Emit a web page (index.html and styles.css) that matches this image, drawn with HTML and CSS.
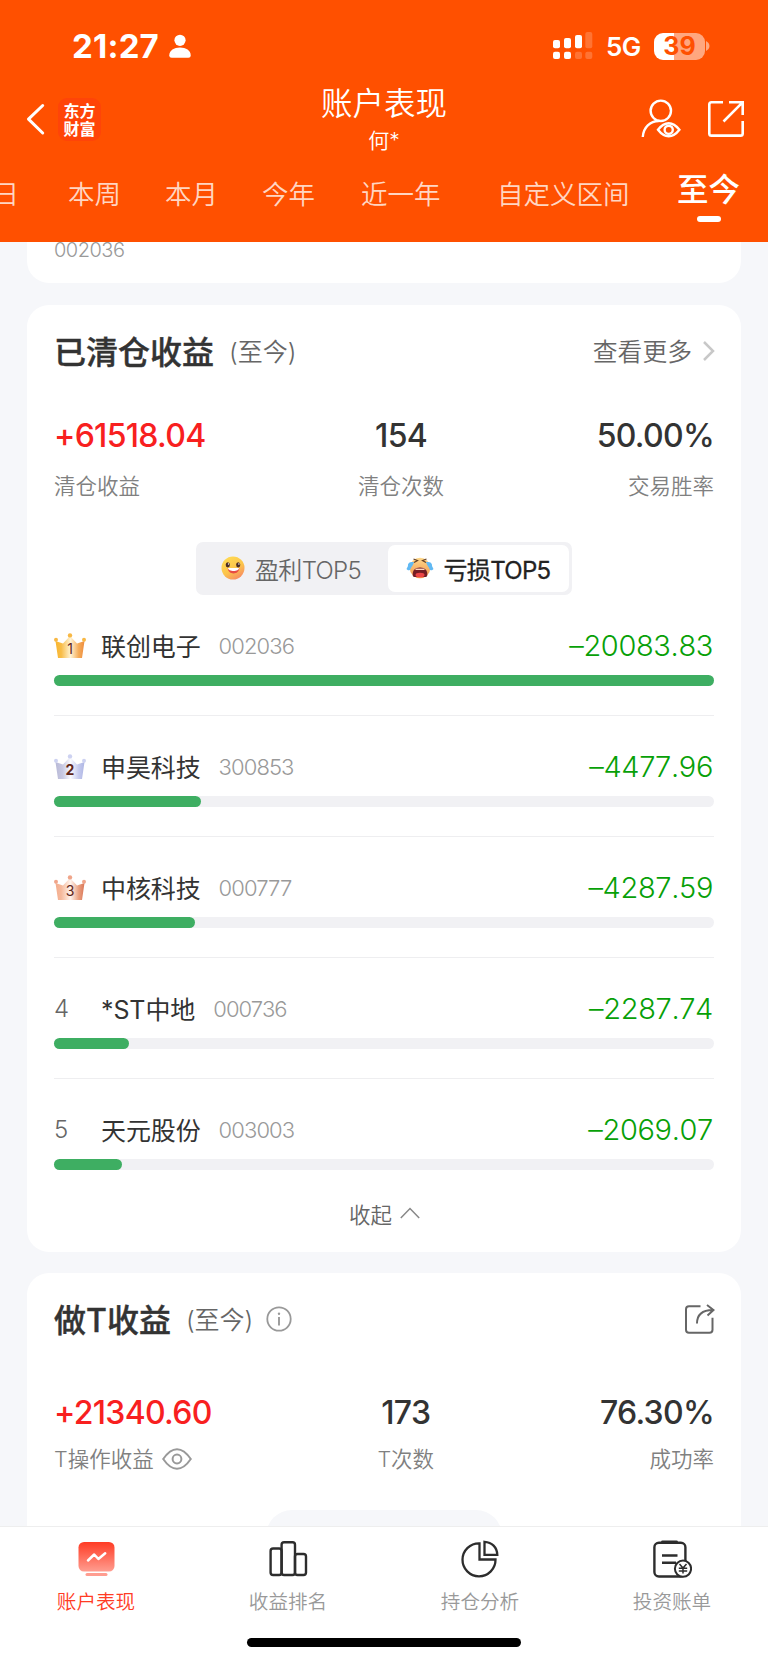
FILE: index.html
```html
<!DOCTYPE html>
<html lang="zh-CN">
<head>
<meta charset="utf-8">
<title>账户表现</title>
<link rel="stylesheet" href="styles.css">
</head>
<body>
<div class="app">
  <header class="header">
    <div class="status">
      <span class="time">21:27</span>
      <svg class="person" width="22" height="24" viewBox="169 34 22 24" fill="#fff"><circle cx="180" cy="40.3" r="5.6"/><path d="M169.3 55.2c0-4.6 4.8-7.6 10.7-7.6s10.7 3 10.7 7.6c0 1.7-.9 2.5-2.4 2.5h-16.6c-1.5 0-2.4-.8-2.4-2.5z"/></svg>
      <svg class="signal" width="40" height="28" viewBox="553 32 40 28" fill="#fff"><rect x="553" y="40" width="7" height="8.3" rx="2"/><rect x="564" y="38" width="7" height="10.3" rx="2"/><rect x="575" y="35" width="7" height="13.3" rx="2"/><rect x="585.3" y="32" width="7" height="16.3" rx="2" opacity=".2"/><rect x="553" y="51.8" width="7" height="7.2" rx="2"/><rect x="564" y="51.8" width="7" height="7.2" rx="2"/><rect x="575" y="51.8" width="7" height="7.2" rx="2" opacity=".2"/><rect x="585.3" y="51.8" width="7" height="7.2" rx="2" opacity=".2"/></svg>
      <span class="network">5G</span>
      <span class="battery">39</span>
      <svg class="battery-tip" width="4" height="10" viewBox="0 0 4 10"><path d="M0 0c2 1 3.5 2.800 3.500 5s-1.500 4-3.500 5z" fill="#fff" opacity=".5"/></svg>
    </div>
    <div class="titlebar">
      <div class="left">
        <svg width="20" height="34" viewBox="25 102 20 34" fill="none" stroke="#fff" stroke-width="3" stroke-linecap="round" stroke-linejoin="round"><path d="M42.700 105.500 28.500 119.200 42.700 133"/></svg>
        <div class="logo">东方<br>财富</div>
      </div>
      <div class="center"><h1>账户表现</h1><div class="user">何*</div></div>
      <div class="right">
        <svg width="40" height="40" viewBox="641 99 40 40" fill="none" stroke="#fff" stroke-width="2.400"><circle cx="660.800" cy="110.800" r="10.200"/><path d="M642.800 137c.5-9.500 7.500-16 16-16"/><path d="M658 129.800q5-6.500 10.700-6.500t10.700 6.500q-5 6.500-10.700 6.500T658 129.800z"/><circle cx="668.700" cy="129.800" r="4.100"/></svg>
        <svg width="37" height="38" viewBox="708 100 37 38" fill="none" stroke="#fff" stroke-width="2.600"><path d="M723 102.200h-11.500q-2.200 0-2.200 2.200v29q0 2.200 2.200 2.200h29q2.200 0 2.200-2.200V121M729 102.200h13.700V115M742.300 102.600 723.500 121.500"/></svg>
      </div>
    </div>
    <nav class="ranges"><span class="first">昨日</span><span>本周</span><span>本月</span><span>今年</span><span>近一年</span><span>自定义区间</span><span class="on">至今</span></nav>
  </header>

  <main class="content">
    <section class="card previous"><span>002036</span></section>

    <section class="card cleared">
      <div class="card-head">
        <h2>已清仓收益</h2><span class="period">(至今)</span>
        <span class="more">查看更多<svg width="12" height="20" viewBox="0 0 12 20" fill="none" stroke="#c8c8c8" stroke-width="2.500"><path d="M1 1l9 9-9 9"/></svg></span>
      </div>
      <div class="stats">
        <div class="stat"><b class="up">+61518.04</b><span>清仓收益</span></div>
        <div class="stat mid"><b>154</b><span>清仓次数</span></div>
        <div class="stat end"><b>50.00%</b><span>交易胜率</span></div>
      </div>
      <div class="switch">
        <div class="option">
          <svg width="24" height="24" viewBox="0 0 24 24"><defs><linearGradient id="smile" x1=".2" y1="0" x2=".8" y2="1"><stop offset="0" stop-color="#ffdb52"/><stop offset=".55" stop-color="#fcc44b"/><stop offset="1" stop-color="#f78565"/></linearGradient></defs><circle cx="12" cy="12" r="11.500" fill="url(#smile)"/><ellipse cx="6.800" cy="8.800" rx="2.100" ry="2.600" fill="#4b2c23"/><ellipse cx="17.200" cy="8.800" rx="2.100" ry="2.600" fill="#4b2c23"/><circle cx="7.500" cy="8" r=".7" fill="#fff"/><circle cx="17.900" cy="8" r=".7" fill="#fff"/><path d="M6.800 12h11.400c.4 7-11.400 7.500-11.400 0z" fill="#e84b43"/><path d="M7 12h11c0 4-10.800 4-11 0z" fill="#fff"/></svg>
          <span>盈利TOP5</span>
        </div>
        <div class="option on">
          <svg width="28" height="24" viewBox="0 0 28 24"><defs><linearGradient id="cry" x1="0" y1="0" x2="0" y2="1"><stop offset="0" stop-color="#ffd98a"/><stop offset="1" stop-color="#f2934b"/></linearGradient></defs><circle cx="14" cy="12" r="10.300" fill="url(#cry)"/><path d="M7.500 3l4 1.500-3.500 2M20.500 3l-4 1.500 3.500 2" fill="none" stroke="#654127" stroke-width="1.200"/><path d="M8 6C4 5.500 1.500 7 2 10l-1.500 3c1.500 2 3.500 1.500 4 0 .5-2 3-4 3.500-7zM20 6c4-.5 6.500 1 6 4l1.500 3c-1.500 2-3.500 1.500-4 0-.5-2-3-4-3.500-7z" fill="#61b9f3"/><path d="M6.800 19.500c-.6-5 2-8 7.200-8s7.800 3 7.200 8c-.2 1.200-1 1.500-2.200 1.500H9c-1.200 0-2-.3-2.200-1.500z" fill="#741d24"/><path d="M9.500 12.600h9v1.400h-9z" fill="#ffd8bd"/><ellipse cx="14" cy="19" rx="4.500" ry="2.300" fill="#ed4546"/></svg>
          <span>亏损TOP5</span>
        </div>
      </div>
      <div class="list">
        <div class="row"><div class="line"><span class="rank">
          <svg width="32" height="26" viewBox="0 0 32 26"><defs><linearGradient id="gold"><stop offset="0" stop-color="#f9b62e"/><stop offset=".2" stop-color="#f8bd48"/><stop offset=".52" stop-color="#fff3d4"/><stop offset=".8" stop-color="#f5ac58"/><stop offset="1" stop-color="#ee8c3f"/></linearGradient></defs><path d="M1.500 8 9 10.500 16 3l7 7.500L30.500 8 28 25H4z" fill="url(#gold)"/><g fill="#f8b844"><circle cx="2" cy="6.700" r="2"/><circle cx="16" cy="2.400" r="2.200"/><circle cx="30" cy="6.700" r="2"/></g><text x="16" y="21" class="medal thin">1</text></svg></span><span class="name">联创电子</span><span class="code">002036</span><span class="loss">–20083.83</span></div><div class="track"><div class="fill" style="width:100%"></div></div></div>
        <div class="row"><div class="line"><span class="rank">
          <svg width="32" height="26" viewBox="0 0 32 26"><defs><linearGradient id="silver"><stop offset="0" stop-color="#b8b9d6"/><stop offset=".25" stop-color="#c8c9e3"/><stop offset=".52" stop-color="#fafbff"/><stop offset=".8" stop-color="#c5caee"/><stop offset="1" stop-color="#aeb6e4"/></linearGradient></defs><path d="M1.500 8 9 10.500 16 3l7 7.500L30.500 8 28 25H4z" fill="url(#silver)"/><g fill="#cdd2f1"><circle cx="2" cy="6.700" r="2"/><circle cx="16" cy="2.400" r="2.200"/><circle cx="30" cy="6.700" r="2"/></g><text x="16" y="21" class="medal">2</text></svg></span><span class="name">申昊科技</span><span class="code">300853</span><span class="loss">–4477.96</span></div><div class="track"><div class="fill" style="width:22.300%"></div></div></div>
        <div class="row"><div class="line"><span class="rank">
          <svg width="32" height="26" viewBox="0 0 32 26"><defs><linearGradient id="bronze"><stop offset="0" stop-color="#f4ad8d"/><stop offset=".2" stop-color="#f5b99c"/><stop offset=".52" stop-color="#fff3ec"/><stop offset=".8" stop-color="#eaa080"/><stop offset="1" stop-color="#da7657"/></linearGradient></defs><path d="M1.500 8 9 10.500 16 3l7 7.500L30.500 8 28 25H4z" fill="url(#bronze)"/><g fill="#f0a58a"><circle cx="2" cy="6.700" r="2"/><circle cx="16" cy="2.400" r="2.200"/><circle cx="30" cy="6.700" r="2"/></g><text x="16" y="21" class="medal thin">3</text></svg></span><span class="name">中核科技</span><span class="code">000777</span><span class="loss">–4287.59</span></div><div class="track"><div class="fill" style="width:21.350%"></div></div></div>
        <div class="row"><div class="line"><span class="rank">4</span><span class="name">*ST中地</span><span class="code">000736</span><span class="loss">–2287.74</span></div><div class="track"><div class="fill" style="width:11.400%"></div></div></div>
        <div class="row"><div class="line"><span class="rank">5</span><span class="name">天元股份</span><span class="code">003003</span><span class="loss">–2069.07</span></div><div class="track"><div class="fill" style="width:10.300%"></div></div></div>
      </div>
      <div class="collapse">收起<svg width="20" height="12" viewBox="0 0 20 12" fill="none" stroke="#888" stroke-width="1.500"><path d="M.8 11 10 1.500l9.200 9.500"/></svg></div>
    </section>

    <section class="card trading">
      <div class="card-head">
        <h2>做T收益</h2><span class="period">(至今)</span>
        <svg class="info" width="26" height="26" viewBox="0 0 26 26" fill="none" stroke="#999" stroke-width="1.800"><circle cx="13" cy="13" r="11.700"/><path d="M13 11v8.500" stroke-width="1.900"/><circle cx="13" cy="7.800" r="1.200" fill="#999" stroke="none"/></svg>
        <svg class="share" width="30" height="30" viewBox="685 1305 30 30" fill="none" stroke="#666" stroke-width="2"><path d="M700.500 1307.300H689q-3 0-3 3v20.500q0 3 3 3h20.500q3 0 3-3v-12"/><path d="M697 1324.500c0-9 5-13.500 15.800-13.500M707 1306l6.500 5-6 5.500"/></svg>
      </div>
      <div class="stats">
        <div class="stat"><b class="up">+21340.60</b><span>T操作收益<svg width="30" height="22" viewBox="0 0 30 22" fill="none" stroke="#999" stroke-width="2"><path d="M1.200 11C6 4 10 1.200 15 1.200S24 4 28.800 11C24 18 20 20.800 15 20.800S6 18 1.200 11z"/><circle cx="15" cy="11" r="4.400"/></svg></span></div>
        <div class="stat mid"><b>173</b><span>T次数</span></div>
        <div class="stat end"><b>76.30%</b><span>成功率</span></div>
      </div>
      <div class="pill"></div>
    </section>
  </main>

  <footer class="footer">
    <div class="tabs">
      <div class="tab on"><svg width="40" height="40" viewBox="76 1539 40 40"><defs><linearGradient id="screen" x1="0" y1="0" x2="0" y2="1"><stop offset="0" stop-color="#ff3b24"/><stop offset="1" stop-color="#ff9d90"/></linearGradient></defs><rect x="78.500" y="1542" width="36" height="29.500" rx="5.500" fill="url(#screen)"/><rect x="85.500" y="1573" width="22" height="3" rx="1.500" fill="#ff9d90"/><path d="M88 1560.500l6.200-6 4.200 4.500 6.800-5.700" fill="none" stroke="#fff" stroke-width="2.500" stroke-linecap="round" stroke-linejoin="round"/></svg>账户表现</div>
      <div class="tab"><svg width="40" height="40" viewBox="268 1539 40 40" fill="none" stroke="#2d2d2d" stroke-width="2.400"><rect x="270.600" y="1548.500" width="11" height="26.500" rx="2.500"/><rect x="281.600" y="1542.300" width="13.400" height="32.700" rx="2.500"/><rect x="295" y="1554" width="11" height="21" rx="2.500"/></svg>收益排名</div>
      <div class="tab"><svg width="40" height="40" viewBox="460 1539 40 40" fill="none" stroke="#2d2d2d" stroke-width="2.300"><path d="M479.500 1543.300a16.500 16.500 0 1 0 16 16.200h-16z"/><path d="M484.500 1541.800v13h12.800c-.3-7.500-5.300-12.500-12.800-13z"/></svg>持仓分析</div>
      <div class="tab"><svg width="40" height="40" viewBox="652 1539 40 40" fill="none" stroke="#2d2d2d" stroke-width="2.400"><rect x="654.400" y="1542.800" width="31" height="33.700" rx="4.500"/><path d="M662.500 1541.800h14" stroke-width="2.800" stroke-linecap="round"/><path d="M662 1555.500h15.500M662 1562.800h14"/><circle cx="683" cy="1568.700" r="8.100" fill="#fff" stroke-width="2"/><path d="M679.500 1564l3.500 4 3.500-4M683 1568v5.500M678.800 1568.300h8.400M678.800 1571h8.400" stroke-width="1.500"/></svg>投资账单</div>
    </div>
    <div class="indicator"></div>
  </footer>
</div>
</body>
</html>
```

FILE: styles.css
```css
* { box-sizing: border-box; }
body {
  margin: 0;
  font-family: Inter, "Noto Sans CJK SC", sans-serif;
  color: #333;
  background: #f6f7fa;
}
svg { display: block; flex: none; }
h1, h2 { margin: 0; font-weight: 400; }

.app { width: 768px; height: 1662px; display: flex; flex-direction: column; overflow: hidden; }

/* Header */
.header { height: 242px; flex: none; background: #ff5000; color: #fff; overflow: hidden; }
.status { height: 92px; display: flex; align-items: center; padding: 0 59px 0 72px; }
.time { font-size: 33px; font-weight: 700; width: 88px; letter-spacing: .2px; white-space: nowrap; }
.person { margin-left: 9px; }
.signal { margin-left: auto; }
.network { margin-left: 13px; width: 36px; font-size: 26px; line-height: 30px; font-weight: 600; letter-spacing: -.5px; padding-top: 2px; }
.battery {
  margin-left: 12px; width: 51px; height: 27px; border-radius: 9px;
  background: linear-gradient(90deg, #fff 20px, #ffa77f 20px);
  color: #ff5000; font-size: 25px; font-weight: 700; line-height: 27px; text-align: center;
}
.battery-tip { margin-left: 1px; margin-right: -1px; }

.titlebar { height: 73px; display: grid; grid-template-columns: 1fr auto 1fr; padding: 0 23px 0 25px; }
.left { display: flex; align-items: center; gap: 13px; height: 54px; }
.logo {
  width: 43px; height: 43px; border-radius: 9px; background: #ff4408;
  font-family: "Noto Sans CJK SC", sans-serif; font-size: 16px; line-height: 18px; font-weight: 700;
  text-align: center; padding-top: 3px;
}
.center { text-align: center; margin-left: -2px; }
.center h1 { font-size: 31.500px; line-height: 36px; margin-top: -6px; font-weight: 350; }
.user { font-size: 21px; line-height: 28px; margin-top: 5px; font-weight: 350; }
.right { display: flex; justify-content: flex-end; align-items: center; gap: 27px; height: 54px; }

.ranges {
  display: grid; grid-template-columns: 104px 97px 97px 99px 136px 180px 63px;
  margin-left: -36px; height: 77px; align-items: start;
  font-size: 26.500px; line-height: 58px; font-weight: 350; color: #ffd6c3; white-space: nowrap;
}
.ranges .first { padding-left: 2px; }
.ranges .on { font-size: 31.500px; line-height: 49px; font-weight: 500; color: #fff; }
.ranges .on::after { content: ""; display: block; width: 24px; height: 6px; border-radius: 3px; background: #fff; margin: 2px 0 0 20px; }

/* Cards */
.content { flex: 1; min-height: 0; overflow: hidden; padding: 0 27px; }
.card { background: #fff; border-radius: 22px; padding: 0 27px; overflow: hidden; }
.previous { height: 41px; border-radius: 0 0 22px 22px; font-size: 20px; line-height: 16px; color: #999; letter-spacing: -.5px; font-weight: 350; }
.cleared { height: 947px; margin-top: 22px; }
.trading { height: 400px; margin-top: 21px; }

.card-head { height: 92px; display: flex; align-items: center; white-space: nowrap; }
.card-head h2 { font-size: 32px; font-weight: 500; margin-top: -2px; -webkit-text-stroke: .4px currentColor; }
.period { margin-left: 15px; margin-top: -2px; font-size: 25px; font-weight: 350; color: #666; }
.more { margin-left: auto; margin-top: -2px; margin-right: -1px; display: flex; align-items: center; gap: 11px; font-size: 24.800px; font-weight: 350; color: #666; }
.more svg { margin-top: 2px; }
.info { margin-left: 13px; }
.share { margin-left: auto; margin-right: -1px; }

.stats { display: flex; justify-content: space-between; }
.stat { display: flex; flex-direction: column; }
.stat b { font-size: 32px; line-height: 40px; font-weight: 500; letter-spacing: -.7px; margin-top: 19px; }
.stat span { display: flex; align-items: center; gap: 8px; font-size: 21.500px; line-height: 30px; margin-top: 15px; margin-bottom: 1px; font-weight: 350; color: #808080; }
.stat b.up { color: #f8201f; }
.mid { align-items: center; }
.end { align-items: flex-end; }
.trading .stat b { margin-top: 28px; }
.trading .stat span { margin-top: 11px; }

.switch { width: 376px; height: 53px; margin: 40px auto 0; padding: 3px; border-radius: 7px; background: #f1f1f4; display: grid; grid-template-columns: 189px 181px; }
.option { display: flex; align-items: center; justify-content: center; gap: 10px; padding: 0 5px 1px 0; font-size: 24px; font-weight: 350; color: #666; border-radius: 7px; letter-spacing: -.7px; white-space: nowrap; }
.option.on { background: #fff; color: #222; font-weight: 400; padding-right: 1px; -webkit-text-stroke: .3px currentColor; }

/* Ranking */
.row { height: 121px; padding-top: 30px; border-bottom: 1px solid #eeeef0; }
.row:last-child { border-bottom: 0; }
.line { height: 40px; display: flex; align-items: center; white-space: nowrap; }
.rank { width: 47px; font-size: 24px; font-weight: 350; color: #666; }
.rank svg { margin-top: 2px; }
.medal { font-family: Inter, sans-serif; font-size: 14px; font-weight: 700; text-anchor: middle; fill: #5f2519; }
.medal.thin { font-weight: 400; }
.name { font-size: 25px; font-weight: 380; margin-top: -1px; letter-spacing: -.1px; }
.code { margin-left: 18px; margin-top: 1px; font-size: 22px; font-weight: 350; color: #999; letter-spacing: -.9px; }
.loss { margin-left: auto; margin-right: 1px; font-size: 29px; font-weight: 350; color: #07a007; letter-spacing: -.35px; font-kerning: none; }
.track { height: 11px; margin-top: 10px; border-radius: 6px; background: #f1f1f4; }
.fill { height: 100%; border-radius: 6px; background: #3eae62; }
.collapse { height: 32px; display: flex; align-items: center; justify-content: center; gap: 8px; margin-top: -3px; padding-left: 1px; font-size: 21.500px; font-weight: 350; color: #666; }
.pill { width: 236px; height: 52px; margin: 35px auto 0; border-radius: 26px; background: #f6f7fa; }

/* Bottom navigation */
.footer { height: 136px; flex: none; background: #fff; border-top: 1px solid #eee; }
.tabs { display: grid; grid-template-columns: repeat(4, 1fr); height: 111px; padding-top: 12px; }
.tab { display: flex; flex-direction: column; align-items: center; font-size: 19.600px; line-height: 28px; font-weight: 350; color: #999; }
.tab svg { margin-bottom: 9px; }
.tab.on { color: #ff3b24; }
.indicator { width: 274px; height: 9px; border-radius: 5px; background: #000; margin: 0 auto; }
```
